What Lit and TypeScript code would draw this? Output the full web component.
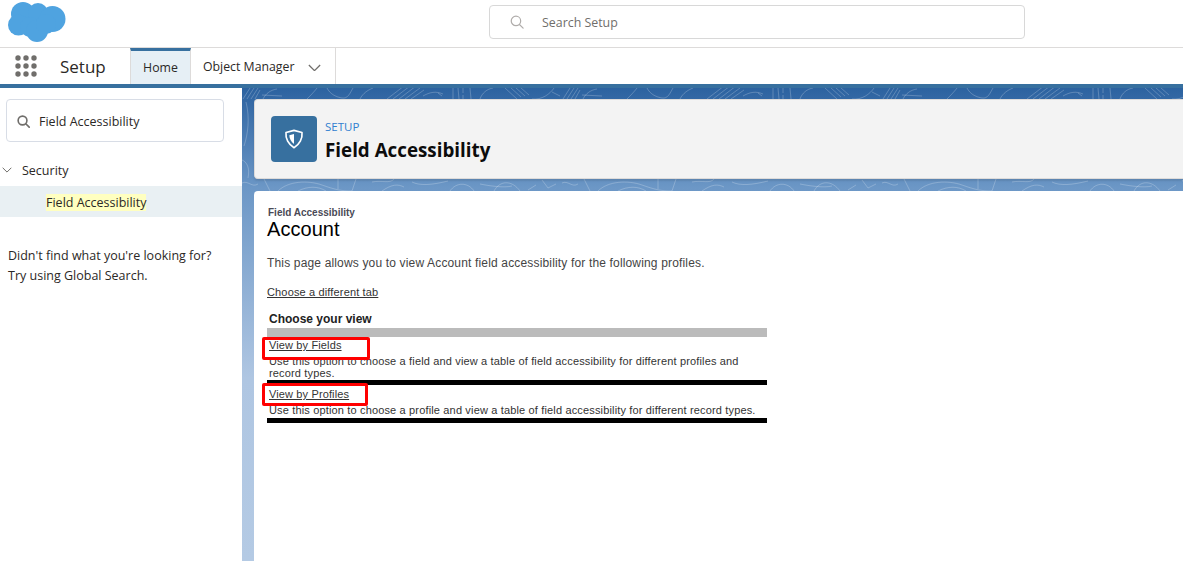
import { LitElement, html, css, svg } from "lit";
import { customElement } from "lit/decorators.js";

const searchIcon = (c: string, size: number, sw = 1.6) => html`<svg width=${size} height=${size} viewBox="0 0 16 16" fill="none" stroke=${c} stroke-width=${sw} stroke-linecap="round"><circle cx="6.8" cy="6.8" r="5.4"/><path d="M10.8 10.8 15 15"/></svg>`;

const cloud = html`<svg class="logo" width="58" height="43" viewBox="0 0 58 43"><g fill="#4fa3e0"><circle cx="15" cy="14" r="12"/><circle cx="30" cy="13" r="10"/><circle cx="44.5" cy="19" r="13"/><circle cx="10.5" cy="25" r="10.5"/><circle cx="22" cy="27" r="10"/><circle cx="29" cy="31" r="11"/><circle cx="38" cy="24" r="10"/></g></svg>`;

const dots = html`<svg width="22" height="22" viewBox="0 0 22 22" fill="#706e6b">${[3, 11, 19].flatMap((y) => [3, 11, 19].map((x) => svg`<circle cx=${x} cy=${y} r="2.7"/>`))}</svg>`;

const chevron = (w: number) => html`<svg width=${w} height=${w * 0.6} viewBox="0 0 12 7" fill="none" stroke="#706e6b" stroke-width="1.2"><path d="M.8.8 6 6 11.2.8"/></svg>`;

const contours = svg`<g fill="none" stroke="#fff" stroke-opacity=".22" stroke-width="1">
  <path d="M145 11 162 -2M151 11 168 -2M157 11 174 -2M163 11 178 0M169 11 182 2"/>
  <path d="M181 8C188 4 194 3 201 6M196 5 200 8"/>
  <path d="M211 0V11M216 0 217 11M221 -1V5M221 7V11M228 0 229 11M238 11C240 5 245 1 251 0"/>
  <path d="M263 0 275 11M269 0 279 9M274 0 283 8M279 0 287 7M290 11C300 12 308 6 312 0"/>
  <path d="M1 11 8 0M5 11 12 0M9 11 16 0M13 11 18 2M21 11C24 5 29 2 35 1"/>
  <path d="M65 11C68 8 72 4 75 0M85 0C88 6 94 9 100 10S108 5 111 0M118 11C121 5 126 2 131 0"/>
  <path d="M20 7 40 8M310 4 318 8"/>
  <path d="M0 95C6 92 10 100 16 96M22 91 28 103M36 103C46 93 66 92 80 97S100 103 110 103M114 91 110 103M130 94C140 92 148 96 152 91M140 103C150 96 156 96 162 99M170 94C178 98 190 97 206 93M208 103C214 94 226 94 232 103M238 96C248 98 262 100 270 98M286 102 294 97M300 92 306 100 314 96"/>
  <path d="M56 103C66 98 76 98 84 103M252 103C258 92 270 92 278 103M96 91V101"/>
  <path d="M4 14C8 30 6 46 2 58M0 72C5 74 8 80 6 90"/>
</g>`;

@customElement("app-root")
export class AppRoot extends LitElement {
  static styles = css`
    :host { display: block; width: 1183px; height: 561px; overflow: hidden; position: relative; background: #fff; color: #16325c; font-family: "Open Sans", sans-serif; }
    .top { height: 47px; border-bottom: 1px solid #dddbda; display: flex; position: relative; }
    .logo { position: absolute; left: 8px; top: 0; }
    .global-search { position: absolute; left: 489px; top: 5px; width: 534px; height: 32px; border: 1px solid #d8d8d8; border-radius: 4px; display: flex; align-items: center; color: #706e6b; font-size: 12.4px; background: #fff; }
    .global-search svg { margin-left: 20px; margin-right: 18px; }
    .nav { height: 36px; display: flex; align-items: stretch; background: #fff; }
    .launcher { width: 130px; display: flex; align-items: center; flex: none; }
    .launcher svg { margin-left: 15px; }
    .launcher span { margin-left: 23px; font-size: 17px; color: #2b2826; }
    .tab { display: flex; align-items: center; font-size: 12.3px; color: #2b2826; border-right: 1px solid #dddbda; }
    .home { width: 59px; justify-content: center; background: #e6eff5; border-left: 1px solid #dddbda; border-top: 3px solid #37709f; height: 33px; }
    .om { width: 145px; padding-left: 12px; box-sizing: border-box; gap: 14px; }
    .om svg { margin-top: 3px; }
    .band { height: 4px; background: #37709f; }
    .body { display: flex; height: 473px; }
    .side { width: 242px; flex: none; background: #fff; font-size: 12.5px; color: #2b2826; }
    .side-search { margin: 11px 18px 0 6px; height: 41px; border: 1px solid #d8dde6; border-radius: 4px; display: flex; align-items: center; }
    .side-search svg { margin-left: 10px; margin-right: 9px; margin-top: 2px; }
    .side-search span { margin-top: 2px; }
    .sec { display: flex; align-items: center; height: 20px; margin-top: 18px; }
    .sec svg { margin-left: 2px; margin-right: 10px; }
    .item { margin-top: 6px; height: 31px; box-sizing: border-box; padding-top: 1px; background: #e9f0f3; display: flex; align-items: center; padding-left: 46px; }
    .item mark { background: #ffffc0; color: inherit; }
    .help { margin: 29px 0 0 8px; line-height: 20px; }
    .main { flex: 1; position: relative; background: linear-gradient(#2c62a0 0, #6c97c6 100px, #afc6e2 290px, #b4cae4 100%); padding: 11px 0 0 12px; overflow: hidden; min-width: 0; }
    .pattern { position: absolute; left: 0; top: 0; }
    .head { position: relative; height: 80px; box-sizing: border-box; background: #f3f3f3; border-radius: 4px 0 0 4px; border: 1px solid #dddbda; border-right: 0; box-shadow: 0 2px 2px rgba(0,0,0,.1); display: flex; align-items: center; padding-left: 16px; gap: 8px; }
    .badge { width: 46px; height: 46px; border-radius: 4px; background: #37709f; display: flex; align-items: center; justify-content: center; flex: none; }
    .titles { padding-top: 4px; }
    .crumb { font-size: 11.5px; color: #2f80d0; line-height: 17px; }
    .title { font-size: 18.8px; font-weight: 700; color: #0c0c0c; line-height: 30px; }
    .card { position: relative; margin-top: 12px; height: 370px; background: #fff; padding: 16px 13px; font-family: "Liberation Sans", Arial, sans-serif; color: #333; border-radius: 4px 0 0 0; }
    .eyebrow { font-size: 10px; font-weight: 700; color: #4a4a56; line-height: 11px; margin-left: 1px; }
    h1 { margin: 0; font-size: 20px; font-weight: 400; color: #000; line-height: 22px; letter-spacing: .05px; }
    .desc { font-size: 12px; margin-top: 16px; line-height: 14px; letter-spacing: .16px; color: #444; }
    .diff { display: block; font-size: 11px; margin-top: 15px; line-height: 14px; color: #333; text-decoration: underline; letter-spacing: .15px; }
    .tbl { width: 500px; margin-top: 13px; font-size: 11px; }
    .tbl h2 { margin: 0 0 0 2px; font-size: 12px; font-weight: 700; color: #222; line-height: 14px; }
    .gray { height: 9px; background: #bbb; margin-top: 2px; }
    .row { padding: 0 2px; box-sizing: border-box; }
    .row a { display: block; color: #333; text-decoration: underline; line-height: 12px; letter-spacing: .13px; }
    .row p { margin: 4px 0 0; line-height: 12px; letter-spacing: .155px; color: #333; }
    .first { height: 43px; padding-top: 2px; }
    .second { height: 33px; padding-top: 3px; }
    .rule { height: 5px; background: #000; }
    .red { position: absolute; border: 3px solid #f00; border-radius: 2px; box-sizing: border-box; }
  `;

  render() {
    return html`
      <div class="top">
        ${cloud}
        <div class="global-search">${searchIcon("#b0adab", 14, 1.4)}<span>Search Setup</span></div>
      </div>
      <div class="nav">
        <div class="launcher">${dots}<span>Setup</span></div>
        <div class="tab home">Home</div>
        <div class="tab om">Object Manager ${chevron(13)}</div>
      </div>
      <div class="band"></div>
      <div class="body">
        <aside class="side">
          <div class="side-search">${searchIcon("#706e6b", 13, 2)}<span>Field Accessibility</span></div>
          <div class="sec">${chevron(10)}<span>Security</span></div>
          <div class="item"><mark>Field Accessibility</mark></div>
          <div class="help">Didn't find what you're looking for?<br />Try using Global Search.</div>
        </aside>
        <main class="main">
          <svg class="pattern" width="941" height="110">
            <defs><pattern id="p" width="320" height="110" patternUnits="userSpaceOnUse">${contours}</pattern></defs>
            <rect width="941" height="110" fill="url(#p)"></rect>
          </svg>
          <div class="head">
            <div class="badge">
              <svg width="20" height="20" viewBox="0 0 18 18"><path d="M9 1.2 16.2 3.2C16.8 8.6 14 14 9 16.8 4 14 1.2 8.6 1.8 3.2Z" fill="none" stroke="#fff" stroke-width="1.5" stroke-linejoin="round"/><path d="M9 4.4 4.8 5.6C4.8 8.6 6.4 11.6 9 13.4Z" fill="#fff"/></svg>
            </div>
            <div class="titles">
              <div class="crumb">SETUP</div>
              <div class="title">Field Accessibility</div>
            </div>
          </div>
          <div class="card">
            <div class="eyebrow">Field Accessibility</div>
            <h1>Account</h1>
            <div class="desc">This page allows you to view Account field accessibility for the following profiles.</div>
            <a class="diff">Choose a different tab</a>
            <div class="tbl">
              <h2>Choose your view</h2>
              <div class="gray"></div>
              <div class="row first">
                <a>View by Fields</a>
                <p>Use this option to choose a field and view a table of field accessibility for different profiles and record types.</p>
              </div>
              <div class="rule"></div>
              <div class="row second">
                <a>View by Profiles</a>
                <p>Use this option to choose a profile and view a table of field accessibility for different record types.</p>
              </div>
              <div class="rule"></div>
            </div>
          </div>
        </main>
      </div>
      <div class="red" style="left:262px;top:337px;width:108px;height:23px"></div>
      <div class="red" style="left:262px;top:383px;width:106px;height:23px"></div>
    `;
  }
}
